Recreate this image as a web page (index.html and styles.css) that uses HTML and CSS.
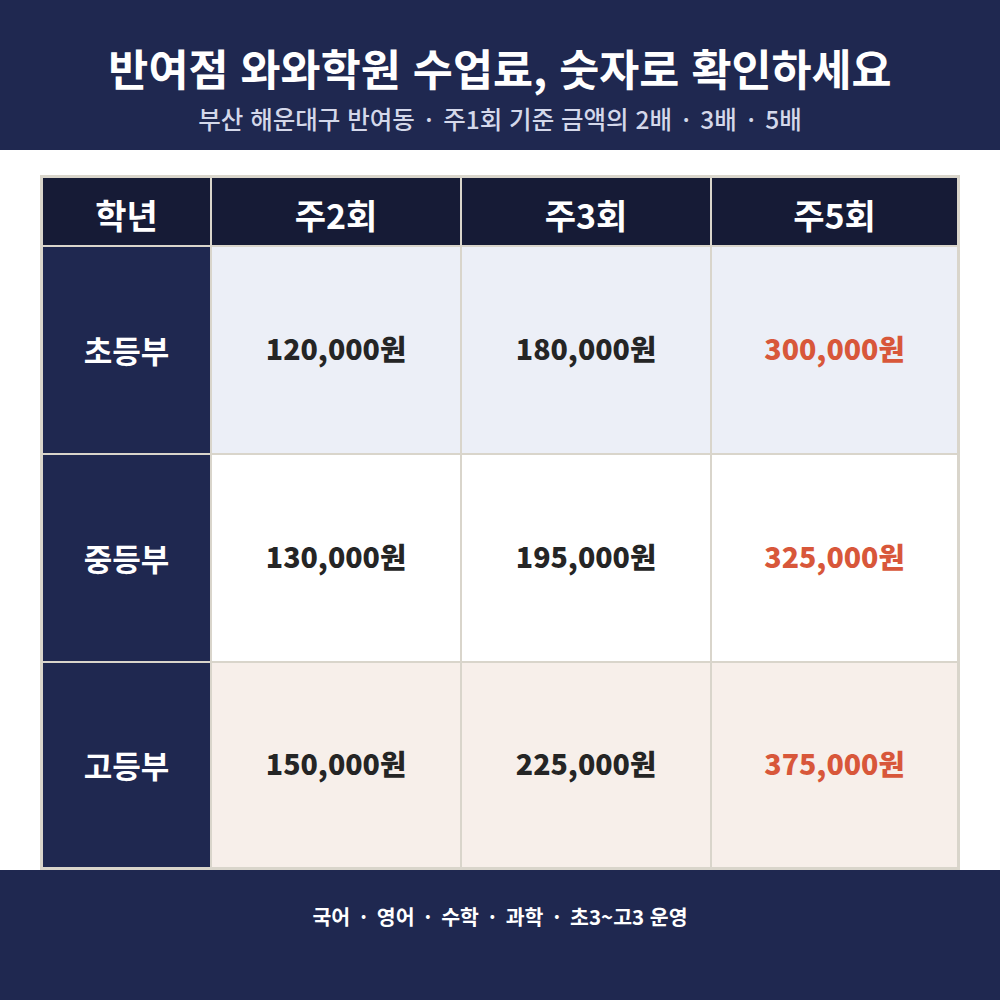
FILE: index.html
```html
<!DOCTYPE html>
<html lang="ko">
<head>
<meta charset="utf-8">
<link rel="stylesheet" href="styles.css">
</head>
<body>
<div class="page">
  <header class="hero">
    <h1 class="title">반여점 와와학원 수업료, 숫자로 확인하세요</h1>
    <p class="subtitle">부산 해운대구 반여동<span class="dot">·</span>주1회 기준 금액의 2배<span class="dot">·</span>3배<span class="dot">·</span>5배</p>
  </header>
  <main class="content">
    <div class="table">
      <div class="cell head">학년</div>
      <div class="cell head">주2회</div>
      <div class="cell head">주3회</div>
      <div class="cell head">주5회</div>

      <div class="cell label">초등부</div>
      <div class="cell price r1">120,000원</div>
      <div class="cell price r1">180,000원</div>
      <div class="cell price r1 accent">300,000원</div>

      <div class="cell label">중등부</div>
      <div class="cell price r2">130,000원</div>
      <div class="cell price r2">195,000원</div>
      <div class="cell price r2 accent">325,000원</div>

      <div class="cell label">고등부</div>
      <div class="cell price r3">150,000원</div>
      <div class="cell price r3">225,000원</div>
      <div class="cell price r3 accent">375,000원</div>
    </div>
  </main>
  <footer class="foot">국어<span class="fdot">·</span>영어<span class="fdot">·</span>수학<span class="fdot">·</span>과학<span class="fdot">·</span>초3~고3 운영</footer>
</div>
</body>
</html>
```
FILE: styles.css
```css
* { box-sizing: border-box; margin: 0; padding: 0; }
html, body { width: 1000px; height: 1000px; background: #ffffff; }
body { font-family: "Noto Sans CJK KR", "Noto Sans", sans-serif; }
.page { width: 1000px; height: 1000px; display: flex; flex-direction: column; }

.hero {
  height: 150px;
  background: #1f2850;
  display: flex;
  flex-direction: column;
  align-items: center;
  padding-top: 42px;
}
.title {
  color: #ffffff;
  font-size: 43.5px;
  font-weight: 700;
  line-height: 52px;
  white-space: nowrap;
}
.subtitle {
  color: #d4d8ea;
  font-size: 24.5px;
  font-weight: 500;
  line-height: 34px;
  margin-top: 8px;
  white-space: nowrap;
}
.dot {
  display: inline-block;
  margin: 0 10.5px;
}

.content {
  padding: 25px 40px 0 40px;
  height: 720px;
}
.table {
  height: 695px;
  background: #d9d5cb;
  padding: 3px;
  display: grid;
  grid-template-columns: 167px 248px 248px 1fr;
  grid-template-rows: 67px 206px 206px 1fr;
  gap: 2px;
}
.cell {
  display: flex;
  align-items: center;
  justify-content: center;
  font-weight: 700;
}
.head {
  background: #161b36;
  color: #ffffff;
  font-size: 34px;
  padding-top: 6px;
}
.label {
  background: #1f2850;
  color: #ffffff;
  font-size: 31px;
  padding-bottom: 2px;
}
.price {
  color: #252525;
  font-size: 28.5px;
  font-weight: 900;
  padding-bottom: 6px;
}
.r1 { background: #eceff7; }
.r2 { background: #ffffff; }
.r3 { background: #f7efea; }
.accent { color: #d8573a; }

.foot {
  flex: 1;
  background: #1f2850;
  color: #ffffff;
  font-size: 20.5px;
  font-weight: 700;
  text-align: center;
  padding-top: 31px;
}
.fdot {
  display: inline-block;
  margin: 0 10px;
}
```
